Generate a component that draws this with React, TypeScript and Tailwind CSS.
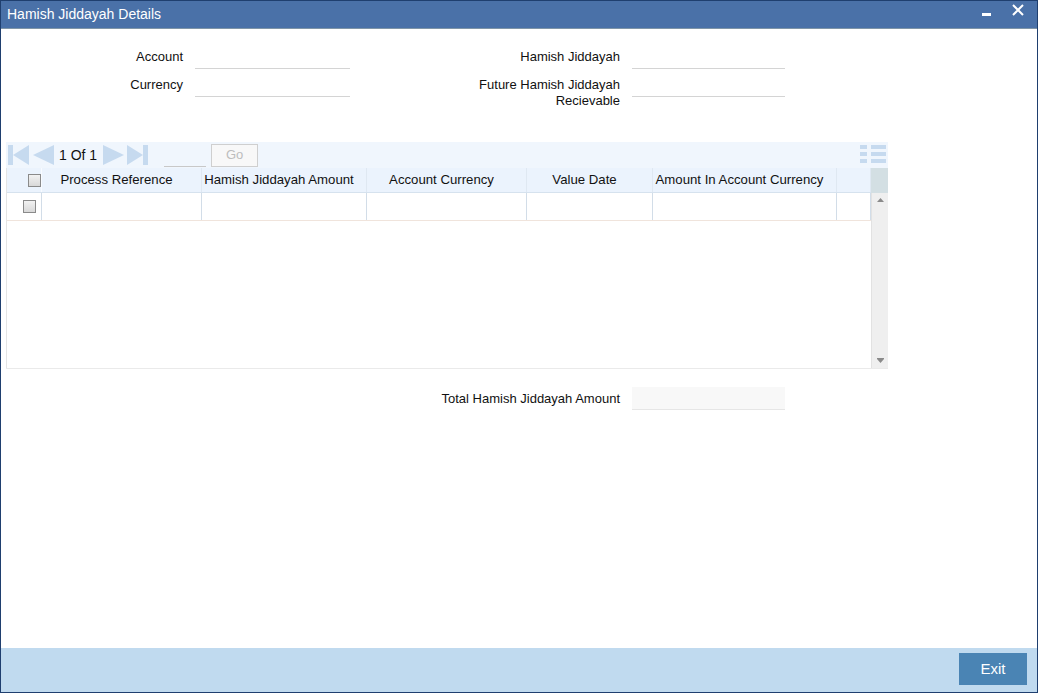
import React from "react";

const Check = () => (
  <div className="w-[13px] h-[13px] border border-[#8a8a8a] bg-gradient-to-b from-[#f2f2f2] to-[#d8d8d8]" />
);

export default function App() {
  const cols = [
    { w: "w-[160px]", t: "Process Reference" },
    { w: "w-[165px]", t: "Hamish Jiddayah Amount" },
    { w: "w-[160px]", t: "Account Currency" },
    { w: "w-[126px]", t: "Value Date" },
    { w: "w-[184px]", t: "Amount In Account Currency" },
    { w: "w-[34px]", t: "" },
  ];
  return (
    <div
      className="w-[1038px] h-[693px] flex flex-col border border-[#1f3f6f] bg-white text-[13px] text-[#111]"
      style={{ fontFamily: '"Liberation Sans", Arial, sans-serif' }}
    >
      {/* Title bar */}
      <div className="h-[28px] flex items-center justify-between bg-[#4a71a8] border-b border-[#7f95a8] pl-[6px] pr-[13px]">
        <span className="text-white text-[14px]">Hamish Jiddayah Details</span>
        <div className="h-full flex items-start gap-[21px]">
          <div className="w-[9px] h-[3px] bg-white mt-[12px]" />
          <svg width="12" height="12" viewBox="0 0 12 12" className="mt-[3px]">
            <path d="M1 1 L11 11 M11 1 L1 11" stroke="white" strokeWidth="2" />
          </svg>
        </div>
      </div>

      {/* Content */}
      <div className="flex-1 flex flex-col">
        <div className="mt-[15px] flex flex-col gap-[3px]">
          <div className="flex items-start">
            <div className="w-[182px] text-right pt-[5px] leading-[16px]">Account</div>
            <div className="ml-[12px] w-[155px] h-[25px] border-b border-[#d4d4d4]" />
            <div className="w-[270px] text-right pt-[5px] leading-[16px]">Hamish Jiddayah</div>
            <div className="ml-[12px] w-[153px] h-[25px] border-b border-[#d4d4d4]" />
          </div>
          <div className="flex items-start">
            <div className="w-[182px] text-right pt-[5px] leading-[16px]">Currency</div>
            <div className="ml-[12px] w-[155px] h-[25px] border-b border-[#d4d4d4]" />
            <div className="w-[270px] text-right pt-[5px] leading-[16px]">
              Future Hamish Jiddayah
              <br />
              Recievable
            </div>
            <div className="ml-[12px] w-[153px] h-[25px] border-b border-[#d4d4d4]" />
          </div>
        </div>

        {/* Grid */}
        <div className="mt-[33px] ml-[5px] w-[882px] flex flex-col">
          <div className="h-[26px] bg-[#f0f6fd] flex items-center relative">
            <svg width="21" height="20" viewBox="0 0 21 20" className="ml-[2px]">
              <rect x="0" y="0" width="5" height="20" fill="#c6daef" />
              <path d="M21 0 L5 10 L21 20 Z" fill="#c6daef" />
            </svg>
            <svg width="21" height="20" viewBox="0 0 21 20" className="ml-[4px]">
              <path d="M21 0 L0 10 L21 20 Z" fill="#c6daef" />
            </svg>
            <span className="ml-[5px] text-[14px]">1 Of 1</span>
            <svg width="21" height="20" viewBox="0 0 21 20" className="ml-[6px]">
              <path d="M0 0 L21 10 L0 20 Z" fill="#c6daef" />
            </svg>
            <svg width="21" height="20" viewBox="0 0 21 20" className="ml-[3px]">
              <path d="M0 0 L16 10 L0 20 Z" fill="#c6daef" />
              <rect x="16" y="0" width="5" height="20" fill="#c6daef" />
            </svg>
            <div className="ml-[16px] w-[42px] h-[22px] border-b border-[#c8c8c8] self-end mb-[1px]" />
            <div className="ml-[5px] w-[47px] h-[23px] border border-[#cfcfcf] bg-[#f8f8f8] flex items-center justify-center text-[#bdbdbd] text-[13px]">
              Go
            </div>
            <svg width="26" height="20" viewBox="0 0 26 20" className="absolute right-[2px] top-[3px]">
              <rect x="0" y="0" width="7" height="4" fill="#c6daef" />
              <rect x="11" y="0" width="15" height="4" fill="#c6daef" />
              <rect x="0" y="7" width="7" height="4" fill="#c6daef" />
              <rect x="11" y="7" width="15" height="4" fill="#c6daef" />
              <rect x="0" y="14" width="7" height="4" fill="#c6daef" />
              <rect x="11" y="14" width="15" height="4" fill="#c6daef" />
            </svg>
          </div>
          <div className="flex h-[201px] border-b border-[#eaeaea]">
            <div className="w-[865px] flex flex-col border-l border-[#e4e4e4]">
              <div className="h-[25px] flex bg-[#ebf3fd] border-b border-[#d6e2ee]">
                <div className="w-[35px] flex items-center justify-end border-r border-[#f8fbff]">
                  <Check />
                </div>
                {cols.map((c, i) => (
                  <div
                    key={i}
                    className={`${c.w} flex items-center justify-center pr-[10px] border-r border-[#dfe8f2] whitespace-nowrap text-[14px]`}
                  >
                    <span className="text-[13.2px]">{c.t}</span>
                  </div>
                ))}
              </div>
              <div className="h-[28px] flex border-b border-[#f0e4dc]">
                <div className="w-[35px] flex items-center pl-[16px] border-r border-[#d2dde8]">
                  <Check />
                </div>
                {cols.map((c, i) => (
                  <div key={i} className={`${c.w} border-r border-[#d2dde8]`} />
                ))}
              </div>
            </div>
            <div className="w-[17px] flex flex-col">
              <div className="h-[25px] bg-[#d3dfe3]" />
              <div className="flex-1 bg-[#efefef] border-l border-[#e2e2e2] flex flex-col items-center justify-between py-[5px]">
                <svg width="7" height="4" viewBox="0 0 7 4">
                  <path d="M3.5 0 L7 4 L0 4 Z" fill="#8a8a8a" />
                </svg>
                <svg width="7" height="5" viewBox="0 0 7 5">
                  <path d="M0 0 L7 0 L7 1 L0 1 Z M0 1 L7 1 L3.5 5 Z" fill="#8a8a8a" />
                </svg>
              </div>
            </div>
          </div>
        </div>

        {/* Total */}
        <div className="mt-[18px] flex items-center">
          <div className="w-[619px] text-right">Total Hamish Jiddayah Amount</div>
          <div className="ml-[12px] w-[153px] h-[23px] bg-[#f8f8f8] border-b border-[#e6e6e6]" />
        </div>
      </div>

      {/* Footer */}
      <div className="h-[44px] bg-[#c0daef] flex items-start justify-end pr-[10px] pt-[5px]">
        <div className="w-[68px] h-[32px] bg-[#4a84b4] text-white text-[15px] flex items-center justify-center">
          Exit
        </div>
      </div>
    </div>
  );
}
